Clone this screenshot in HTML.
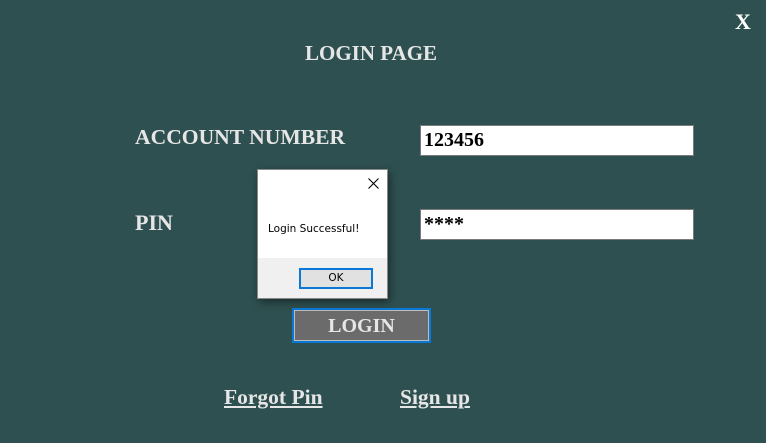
<!DOCTYPE html>
<html><head><style>
body{margin:0;width:766px;height:443px;background:#2f5050;position:relative;overflow:hidden;font-family:"Liberation Serif",serif;font-weight:bold;color:#e6e6e6}
.a{position:absolute;white-space:nowrap}
.inp{position:absolute;background:#fff;border:1px solid #7a7a7a;box-sizing:border-box;color:#000;font-size:20px;padding-left:3px;line-height:28px}
</style></head><body>
<div class="a" style="left:735px;top:9px;font-size:22px;color:#fff">X</div>
<div class="a" style="left:305px;top:41px;font-size:21px">LOGIN PAGE</div>
<div class="a" style="left:135px;top:125px;font-size:21.6px">ACCOUNT NUMBER</div>
<div class="a" style="left:135px;top:210px;font-size:22px">PIN</div>
<div class="inp" style="left:420px;top:125px;width:274px;height:31px">123456</div>
<div class="inp" style="left:420px;top:209px;width:274px;height:31px">****</div>
<div class="a" style="left:292px;top:308px;width:139px;height:35px;box-sizing:border-box;border:2px solid #0a78d7;">
<div style="position:absolute;left:0;top:0;right:0;bottom:0;border:1px solid #bcbcbc;background:#6b6b6b;text-align:center;font-size:20px;line-height:31px">LOGIN</div></div>
<div class="a" style="left:224px;top:385px;font-size:21.5px;text-decoration:underline">Forgot Pin</div>
<div class="a" style="left:400px;top:385px;font-size:21.5px;text-decoration:underline">Sign up</div>
<div class="a" style="left:257px;top:169px;width:131px;height:130px;background:#fff;border:1px solid #888;box-sizing:border-box;box-shadow:2px 3px 8px rgba(0,0,0,.45);font-family:'DejaVu Sans',sans-serif;font-weight:normal;color:#000">
<svg style="position:absolute;left:110px;top:8px" width="11" height="11"><path d="M0.5 0.5L10.5 10.5M10.5 0.5L0.5 10.5" stroke="#000" stroke-width="1.1"/></svg>
<div class="a" style="left:10px;top:53px;font-size:10.5px">Login Successful!</div>
<div style="position:absolute;left:0;right:0;top:88px;bottom:0;background:#f0f0f0"></div>
<div style="position:absolute;left:41px;top:98px;width:74px;height:21px;box-sizing:border-box;border:2px solid #0a78d7;background:#e1e1e1;text-align:center;font-size:10.5px;line-height:17px">OK</div>
</div>
</body></html>
